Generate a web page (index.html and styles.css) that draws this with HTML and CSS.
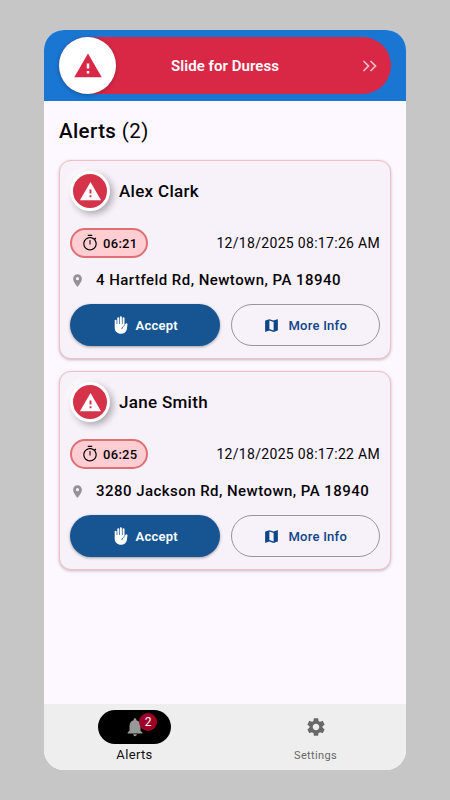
FILE: index.html
```html
<!DOCTYPE html>
<html lang="en">
<head>
    <meta charset="UTF-8">
    <meta name="viewport" content="width=device-width, initial-scale=1.0">
    <title>Alerts</title>
    <link rel="stylesheet" href="styles.css">
</head>
<body>
    <!-- Shared icons -->
    <svg class="sprite">
        <symbol id="icon-warning" viewBox="0 0 24 24"><path d="M1 21h22L12 2 1 21zm12-3h-2v-2h2v2zm0-4h-2v-4h2v4z"/></symbol>
        <symbol id="icon-timer" viewBox="0 0 24 24"><path d="M15 1H9v1.600h6V1zm-3.700 13h1.400V8h-1.400v6zm7.730-6.610l1.420-1.420c-.43-.51-.9-.99-1.410-1.410l-1.420 1.420C16.070 4.740 14.120 4 12 4c-4.970 0-9 4.030-9 9s4.020 9 9 9 9-4.030 9-9c0-2.120-.74-4.070-1.970-5.610zM12 20.400c-4.100 0-7.400-3.300-7.400-7.400s3.300-7.400 7.400-7.400 7.400 3.300 7.400 7.400-3.300 7.400-7.400 7.400z"/></symbol>
        <symbol id="icon-pin" viewBox="0 0 24 24"><path d="M12 2C8.13 2 5 5.13 5 9c0 5.25 7 13 7 13s7-7.75 7-13c0-3.87-3.13-7-7-7zm0 9.5a2.5 2.5 0 0 1 0-5 2.5 2.5 0 0 1 0 5z"/></symbol>
        <symbol id="icon-hand" viewBox="0 0 14 18">
            <path d="M.7 4.6a.95.95 0 0 1 1.9 0V8h.7V2.3a.95.95 0 0 1 1.9 0V8h.7V1.2a1 1 0 0 1 2 0V8h.7V2.3a.95.95 0 0 1 1.9 0v7.2l.9-1.6c.5-.8 1.7-.8 2.100.100L12.900 13c-.5 2.800-2.800 4.800-5.900 4.800C3.400 17.800.700 15.400.700 11.800z"/>
            <path class="crease" d="M10.6 9.600c-1.700.700-2.600 1.900-2.800 3.500"/>
        </symbol>
        <symbol id="icon-map" viewBox="0 0 24 24"><path d="M20.5 3l-.16.03L15 5.1 9 3 3.36 4.9c-.21.07-.36.25-.36.48V20.5c0 .28.22.5.5.5l.16-.03L9 18.9l6 2.1 5.64-1.9c.21-.07.36-.25.36-.48V3.5c0-.28-.22-.5-.5-.5zM15 19l-6-2.11V5l6 2.11V19z"/></symbol>
    </svg>

    <div class="phone">
        <header class="header">
            <div class="slider">
                <div class="thumb">
                    <svg class="thumb-icon"><use href="#icon-warning"/></svg>
                </div>
                <span class="slider-label">Slide for Duress</span>
                <svg class="chevrons" viewBox="0 0 15 12"><path d="M1.500 1l5 5-5 5M8.500 1l5 5-5 5"/></svg>
            </div>
        </header>

        <main class="content">
            <h1 class="title">Alerts <span class="count">(2)</span></h1>

            <div class="card">
                <div class="person">
                    <div class="avatar"><svg class="avatar-icon"><use href="#icon-warning"/></svg></div>
                    <h2 class="name">Alex Clark</h2>
                </div>
                <div class="time-row">
                    <div class="timer"><svg class="timer-icon"><use href="#icon-timer"/></svg>06:21</div>
                    <span class="date">12/18/2025 08:17:26 AM</span>
                </div>
                <div class="address"><svg class="pin-icon"><use href="#icon-pin"/></svg>4 Hartfeld Rd, Newtown, PA 18940</div>
                <div class="actions">
                    <button class="btn accept"><svg class="hand-icon"><use href="#icon-hand"/></svg>Accept</button>
                    <button class="btn info"><svg class="map-icon"><use href="#icon-map"/></svg>More Info</button>
                </div>
            </div>

            <div class="card">
                <div class="person">
                    <div class="avatar"><svg class="avatar-icon"><use href="#icon-warning"/></svg></div>
                    <h2 class="name">Jane Smith</h2>
                </div>
                <div class="time-row">
                    <div class="timer"><svg class="timer-icon"><use href="#icon-timer"/></svg>06:25</div>
                    <span class="date">12/18/2025 08:17:22 AM</span>
                </div>
                <div class="address"><svg class="pin-icon"><use href="#icon-pin"/></svg>3280 Jackson Rd, Newtown, PA 18940</div>
                <div class="actions">
                    <button class="btn accept"><svg class="hand-icon"><use href="#icon-hand"/></svg>Accept</button>
                    <button class="btn info"><svg class="map-icon"><use href="#icon-map"/></svg>More Info</button>
                </div>
            </div>
        </main>

        <nav class="tabs">
            <a class="tab active">
                <span class="pill">
                    <svg class="tab-icon" viewBox="0 0 24 24"><path d="M12 22c1.1 0 2-.9 2-2h-4c0 1.1.89 2 2 2zm6-6v-5c0-3.07-1.64-5.64-4.5-6.32V4c0-.83-.67-1.5-1.5-1.5s-1.5.67-1.5 1.5v.68C7.63 5.36 6 7.92 6 11v5l-2 2v1h16v-1l-2-2z"/></svg>
                    <span class="badge">2</span>
                </span>
                <span class="tab-label">Alerts</span>
            </a>
            <a class="tab">
                <span class="pill">
                    <svg class="tab-icon" viewBox="0 0 24 24"><path d="M19.14 12.94c.04-.3.06-.61.06-.94 0-.32-.02-.64-.07-.94l2.03-1.58c.18-.14.23-.41.12-.61l-1.92-3.32c-.12-.22-.37-.29-.59-.22l-2.39.96c-.5-.38-1.03-.7-1.62-.94l-.36-2.54c-.04-.24-.24-.41-.48-.41h-3.84c-.24 0-.43.17-.47.41l-.36 2.54c-.59.24-1.13.57-1.62.94l-2.39-.96c-.22-.08-.47 0-.59.22L2.74 8.87c-.12.21-.08.47.12.61l2.03 1.58c-.05.3-.09.63-.09.94s.02.64.07.94l-2.03 1.58c-.18.14-.23.41-.12.61l1.92 3.32c.12.22.37.29.59.22l2.39-.96c.5.38 1.03.7 1.62.94l.36 2.54c.05.24.24.41.48.41h3.84c.24 0 .44-.17.47-.41l.36-2.54c.59-.24 1.13-.56 1.62-.94l2.39.96c.22.08.47 0 .59-.22l1.92-3.32c.12-.22.07-.47-.12-.61l-2.01-1.58zM12 15.6c-1.98 0-3.6-1.62-3.6-3.6s1.62-3.6 3.6-3.6 3.6 1.62 3.6 3.6-1.62 3.6-3.6 3.6z"/></svg>
                </span>
                <span class="tab-label">Settings</span>
            </a>
        </nav>
    </div>
</body>
</html>
```

FILE: styles.css
```css
* {
    box-sizing: border-box;
}
body {
    margin: 0;
    padding: 30px 44px;
    height: 800px;
    background-color: #c6c6c6;
    font-family: Roboto, sans-serif;
    color: #060508;
}
svg {
    display: block;
    flex: none;
    fill: currentColor;
}
.sprite {
    display: none;
}
.phone {
    display: flex;
    flex-direction: column;
    width: 362px;
    height: 740px;
    border-radius: 20px;
    overflow: hidden;
    background-color: #fdf7ff;
}

/* Header */
.header {
    height: 71px;
    padding: 7px 15px;
    background-color: #1976d2;
}
.slider {
    display: flex;
    align-items: center;
    justify-content: space-between;
    height: 57px;
    padding-right: 14px;
    border-radius: 29px;
    background-color: #d82846;
    color: #fff;
}
.thumb {
    display: flex;
    align-items: center;
    justify-content: center;
    width: 57px;
    height: 57px;
    border-radius: 50%;
    background-color: #fff;
    color: #d82846;
    box-shadow: 0 1px 4px rgba(0, 0, 0, 0.25);
}
.thumb-icon {
    width: 30px;
    height: 30px;
}
.slider-label {
    margin-left: -28px;
    font-size: 15px;
    font-weight: 600;
    letter-spacing: 0.05px;
}
.chevrons {
    width: 15px;
    height: 12px;
    fill: none;
    stroke: #f6bcc8;
    stroke-width: 1.7;
}

/* Alerts list */
.content {
    flex: 1;
    padding: 16px 15px 0;
}
.title {
    margin: 0 0 15px;
    font-size: 20.5px;
    line-height: 28px;
    font-weight: 500;
    letter-spacing: 0.4px;
}
.count {
    font-weight: 400;
}
.card {
    height: 199px;
    margin-bottom: 12px;
    padding: 10px;
    border: 1px solid #f0c0c4;
    border-radius: 12px;
    background-color: #f7f1f9;
    box-shadow: 0 1px 3px rgba(0, 0, 0, 0.25);
}
.person {
    display: flex;
    align-items: center;
    gap: 9px;
    height: 40px;
}
.avatar {
    display: flex;
    align-items: center;
    justify-content: center;
    width: 40px;
    height: 40px;
    border: 3px solid #fff;
    border-radius: 50%;
    background-color: #d43349;
    color: #fff;
    box-shadow: 3px 3px 7px rgba(0, 0, 0, 0.3), -3px -3px 7px rgba(255, 255, 255, 0.7);
}
.avatar-icon {
    width: 23px;
    height: 23px;
}
.name {
    margin: 0;
    font-size: 17px;
    font-weight: 500;
    letter-spacing: 0.3px;
}
.time-row {
    display: flex;
    align-items: center;
    justify-content: space-between;
    margin-top: 17px;
}
.timer {
    display: flex;
    align-items: center;
    gap: 4px;
    width: 78px;
    height: 30px;
    padding-left: 9px;
    border: 2px solid #de7073;
    border-radius: 15px;
    background-color: #ffcdd2;
    font-size: 13px;
    font-weight: 500;
    letter-spacing: 0.3px;
}
.timer-icon {
    width: 18px;
    height: 18px;
}
.date {
    font-size: 14px;
    letter-spacing: 0.31px;
}
.address {
    display: flex;
    align-items: center;
    gap: 11px;
    height: 20px;
    margin-top: 12px;
    font-size: 15px;
    font-weight: 500;
    letter-spacing: 0.46px;
}
.pin-icon {
    width: 15px;
    height: 15px;
    color: #949296;
}
.actions {
    display: grid;
    grid-template-columns: 1fr 1fr;
    gap: 11px;
    margin-top: 14px;
}
.btn {
    display: flex;
    align-items: center;
    justify-content: center;
    gap: 8px;
    height: 42px;
    padding: 0;
    border: none;
    border-radius: 21px;
    font-family: inherit;
    font-size: 13px;
    letter-spacing: 0.25px;
}
.accept {
    padding-left: 2px;
    background-color: #175592;
    color: #fff;
    font-weight: 600;
    box-shadow: 0 1px 3px rgba(0, 0, 0, 0.35);
}
.info {
    border: 1px solid #98959c;
    background-color: transparent;
    color: #0d4589;
    font-weight: 500;
}
.hand-icon {
    width: 14px;
    height: 18px;
}
.crease {
    fill: none;
    stroke: #175592;
    stroke-width: 0.8;
}
.map-icon {
    width: 17px;
    height: 17px;
}

/* Bottom tabs */
.tabs {
    display: grid;
    grid-template-columns: 1fr 1fr;
    height: 66px;
    padding-top: 6px;
    background-color: #eeeeee;
}
.tab {
    display: flex;
    flex-direction: column;
    align-items: center;
    gap: 3px;
    color: #686868;
}
.pill {
    position: relative;
    display: flex;
    align-items: center;
    justify-content: center;
    width: 73px;
    height: 34px;
    border-radius: 17px;
}
.active .pill {
    background-color: #000;
    color: #989898;
}
.tab-icon {
    width: 22px;
    height: 22px;
}
.badge {
    position: absolute;
    top: 3px;
    left: 41px;
    width: 18px;
    height: 18px;
    border-radius: 50%;
    background-color: #a00028;
    color: #fff;
    font-size: 12px;
    line-height: 19px;
    text-align: center;
}
.tab-label {
    padding-top: 1px;
    font-size: 11px;
    line-height: 16px;
    letter-spacing: 0.35px;
}
.active .tab-label {
    padding-top: 0;
    color: #111;
    font-size: 13px;
}
```
